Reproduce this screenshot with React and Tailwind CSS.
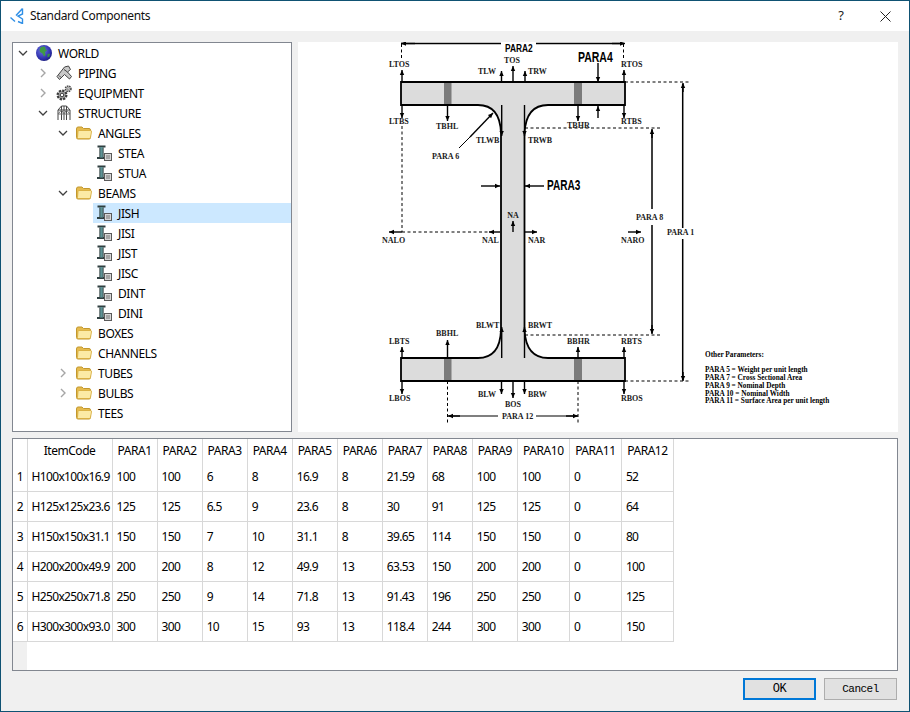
import React from "react";

const UI_FONT = "font-['Noto_Sans','Open_Sans',sans-serif]";

const TREE = [
  { d: 0, open: true, icon: "globe", label: "WORLD" },
  { d: 1, closed: true, icon: "pipe", label: "PIPING" },
  { d: 1, closed: true, icon: "gear", label: "EQUIPMENT" },
  { d: 1, open: true, icon: "frame", label: "STRUCTURE" },
  { d: 2, open: true, icon: "folder", label: "ANGLES" },
  { d: 3, icon: "beam", label: "STEA" },
  { d: 3, icon: "beam", label: "STUA" },
  { d: 2, open: true, icon: "folder", label: "BEAMS" },
  { d: 3, icon: "beam", label: "JISH", selected: true },
  { d: 3, icon: "beam", label: "JISI" },
  { d: 3, icon: "beam", label: "JIST" },
  { d: 3, icon: "beam", label: "JISC" },
  { d: 3, icon: "beam", label: "DINT" },
  { d: 3, icon: "beam", label: "DINI" },
  { d: 2, icon: "folder", label: "BOXES" },
  { d: 2, icon: "folder", label: "CHANNELS" },
  { d: 2, closed: true, icon: "folder", label: "TUBES" },
  { d: 2, closed: true, icon: "folder", label: "BULBS" },
  { d: 2, icon: "folder", label: "TEES" },
];

const INDENT = ["ml-0", "ml-5", "ml-10", "ml-[60px]"];

const COLUMNS = [
  ["ItemCode", "w-[85px]"],
  ["PARA1", "w-[45px]"],
  ["PARA2", "w-[45px]"],
  ["PARA3", "w-[45px]"],
  ["PARA4", "w-[45px]"],
  ["PARA5", "w-[45px]"],
  ["PARA6", "w-[45px]"],
  ["PARA7", "w-[45px]"],
  ["PARA8", "w-[45px]"],
  ["PARA9", "w-[45px]"],
  ["PARA10", "w-[52px]"],
  ["PARA11", "w-[52px]"],
  ["PARA12", "w-[52px]"],
];

const ROWS = [
  ["H100x100x16.9", 100, 100, 6, 8, 16.9, 8, 21.59, 68, 100, 100, 0, 52],
  ["H125x125x23.6", 125, 125, 6.5, 9, 23.6, 8, 30, 91, 125, 125, 0, 64],
  ["H150x150x31.1", 150, 150, 7, 10, 31.1, 8, 39.65, 114, 150, 150, 0, 80],
  ["H200x200x49.9", 200, 200, 8, 12, 49.9, 13, 63.53, 150, 200, 200, 0, 100],
  ["H250x250x71.8", 250, 250, 9, 14, 71.8, 13, 91.43, 196, 250, 250, 0, 125],
  ["H300x300x93.0", 300, 300, 10, 15, 93, 13, 118.4, 244, 300, 300, 0, 150],
];

function Chevron({ open }) {
  if (open) {
    return (
      <svg width="10" height="10" viewBox="0 0 10 10" fill="none" stroke="#404040" strokeWidth="1.3">
        <path d="M1 3 L5 7 L9 3" />
      </svg>
    );
  }
  return (
    <svg width="10" height="10" viewBox="0 0 10 10" fill="none" stroke="#a6a6a6" strokeWidth="1.4">
      <path d="M3 1 L7 5 L3 9" />
    </svg>
  );
}

function TreeIcon({ type }) {
  if (type === "globe") {
    return (
      <svg width="16" height="16" viewBox="0 0 16 16">
        <defs>
          <radialGradient id="globeFill" cx="0.4" cy="0.35" r="0.75">
            <stop offset="0" stopColor="#6f74e6" />
            <stop offset="0.7" stopColor="#2b2ea8" />
            <stop offset="1" stopColor="#15176a" />
          </radialGradient>
        </defs>
        <circle cx="8" cy="8" r="8" fill="url(#globeFill)" />
        <path d="M5 2 L9 1.5 L9.5 4 L11 5.5 L9 7 L9.5 10 L8 11.5 L6.5 8.5 L4 7 L3.5 4.5 Z" fill="#3f9a45" />
        <path d="M11.5 9 L14 8.5 L13.5 11.5 L11.5 12.5 Z" fill="#3a8f46" />
      </svg>
    );
  }
  if (type === "pipe") {
    return (
      <svg width="16" height="16" viewBox="0 0 16 16">
        <path d="M1 11.5 L8.5 2 L12.5 1 L14.5 4.5 L11.5 7 L15.5 11.5 L13.5 14 L8.5 9.5 L3.5 14.5 Z" fill="#c9c9c9" stroke="#444" strokeWidth="1" strokeLinejoin="round" />
        <path d="M8 4.5 L11.5 7 M3 10.5 L5 12.5" stroke="#444" strokeWidth="1" fill="none" />
      </svg>
    );
  }
  if (type === "gear") {
    return (
      <svg width="16" height="16" viewBox="0 0 16 16" fill="none">
        <circle cx="6" cy="10" r="4.4" fill="#a5a5a5" stroke="#3a3a3a" strokeWidth="2.2" strokeDasharray="2.2 1.2" />
        <circle cx="6" cy="10" r="1.8" fill="#fff" stroke="#3a3a3a" strokeWidth="1" />
        <circle cx="12.2" cy="3.8" r="2.8" fill="#c4c4c4" stroke="#4a4a4a" strokeWidth="1.5" strokeDasharray="1.5 0.8" />
        <circle cx="12.2" cy="3.8" r="1" fill="#fff" stroke="#4a4a4a" strokeWidth="0.5" />
      </svg>
    );
  }
  if (type === "frame") {
    return (
      <svg width="16" height="16" viewBox="0 0 16 16" fill="none" stroke="#454545" strokeWidth="1">
        <path d="M2 5 L5.5 1 H10.5 L14 5 V15 M2 5 V15 M5.5 1 V15 M10.5 1 V15 M8 1 V15 M2 5 H14" />
        <path d="M2 9 L5.5 5 L8 9 L10.5 5 L14 9 M2 9 H14" stroke="#707070" />
      </svg>
    );
  }
  if (type === "folder") {
    return (
      <svg width="16" height="14" viewBox="0 0 16 14">
        <path d="M0.5 3 Q0.5 1 2 1 H6 L7.5 2.5 H13 Q14.5 2.5 14.5 4 V11.5 Q14.5 13 13 13 H2 Q0.5 13 0.5 11.5 Z" fill="#e6bb4e" stroke="#c2982f" />
        <path d="M2 5.5 Q2 4.5 3 4.5 H14.5 Q15.8 4.5 15.5 6 L14.5 11.5 Q14.3 12.5 13 12.5 H2.5 Q1.5 12.5 1.5 11.5 Z" fill="#fbeaa6" stroke="#d4a93a" strokeWidth="0.8" />
      </svg>
    );
  }
  return (
    <svg width="16" height="16" viewBox="0 0 16 16">
      <path d="M1.5 1.5 H9.5 M1 13 H9" stroke="#2f3f40" strokeWidth="2" />
      <path d="M5.5 2 V12.5" stroke="#5f9496" strokeWidth="3" />
      <path d="M3.8 2.5 V12 M7.2 2.5 V12" stroke="#2f3f40" strokeWidth="0.9" />
      <rect x="8.5" y="8.5" width="7" height="7" fill="#d8d8d8" stroke="#5a5a5a" />
      <path d="M10 11 H14 M10 13 H14" stroke="#5a5a5a" strokeWidth="0.8" />
    </svg>
  );
}

function TreeRow({ item }) {
  return (
    <div className={`flex h-5 items-center ${INDENT[item.d]}`}>
      <span className="flex w-5 shrink-0 items-center justify-center">
        {item.open && <Chevron open />}
        {item.closed && <Chevron />}
      </span>
      <div className={`flex h-5 flex-1 items-center gap-[6px] pl-[3px] ${item.selected ? "bg-[#cce8ff]" : ""}`}>
        <span className="flex w-4 shrink-0 items-center justify-center">
          <TreeIcon type={item.icon} />
        </span>
        <span className="pt-[2px] tracking-[-0.4px] text-black">{item.label}</span>
      </div>
    </div>
  );
}

// labels: [x, y, text, anchor]
const LABELS = [
  [389, 67, "LTOS"], [621, 67, "RTOS"], [512, 63, "TOS", "middle"], [478, 74, "TLW"], [528, 74, "TRW"],
  [389, 124, "LTBS"], [621, 124, "RTBS"], [436, 129, "TBHL"], [567, 128, "TBHR"],
  [476, 143, "TLWB"], [528, 143, "TRWB"], [432, 159, "PARA 6"], [636, 220, "PARA 8"], [667, 235, "PARA 1"],
  [513, 218, "NA", "middle"], [382, 243, "NALO"], [482, 243, "NAL"], [528, 243, "NAR"], [621, 243, "NARO"],
  [476, 328, "BLWT"], [528, 328, "BRWT"], [436, 336, "BBHL"], [567, 344, "BBHR"],
  [389, 344, "LBTS"], [621, 344, "RBTS"], [389, 401, "LBOS"], [621, 401, "RBOS"],
  [478, 397, "BLW"], [528, 397, "BRW"], [513, 407, "BOS", "middle"], [502, 419, "PARA 12"],
];

const NOTES = [
  [357, "Other Parameters:"],
  [372, "PARA 5 = Weight per unit length"],
  [380, "PARA 7 = Cross Sectional Area"],
  [388, "PARA 9 = Nominal Depth"],
  [395.5, "PARA 10 = Nominal Width"],
  [403, "PARA 11 = Surface Area per unit length"],
];

// arrows: [x1, y1, x2, y2], head at x2,y2
const ARROWS = [
  [402, 82, 402, 70], [624, 82, 624, 70], [513, 82, 513, 66], [501.5, 82, 501.5, 71], [525, 82, 525, 71],
  [402, 105, 402, 118], [624, 105, 624, 118], [447.5, 105, 447.5, 121], [578, 105, 578, 121],
  [598, 63, 598, 82], [598, 118, 598, 106], [501.7, 105, 501.7, 136], [524.5, 105, 524.5, 136],
  [481, 186, 500, 186], [544, 186, 525, 186], [513, 232, 513, 221],
  [402, 232, 389, 232], [500, 232, 489, 232], [524, 232, 537, 232], [628, 232, 641, 232],
  [501.7, 358, 501.7, 327], [524.5, 358, 524.5, 327], [447.5, 358, 447.5, 340], [578, 358, 578, 347],
  [402, 358, 402, 347], [624, 358, 624, 347], [402, 381, 402, 394], [624, 381, 624, 394],
  [501.5, 381, 501.5, 394], [513, 381, 513, 398], [524.5, 381, 524.5, 394],
  [683, 92, 683, 83], [683, 372, 683, 381], [652, 138, 652, 129], [652, 325, 652, 334],
  [460, 416, 448, 416], [566, 416, 578, 416], [415, 43.5, 401, 43.5], [612, 43.5, 625, 43.5],
  [470, 137, 493, 113],
];

function head([x1, y1, x2, y2]) {
  const s = 2.2;
  const len = Math.hypot(x2 - x1, y2 - y1);
  const ux = (x2 - x1) / len;
  const uy = (y2 - y1) / len;
  const bx = x2 - ux * 5;
  const by = y2 - uy * 5;
  return `${x2},${y2} ${bx - uy * s},${by + ux * s} ${bx + uy * s},${by - ux * s}`;
}

function BeamDrawing() {
  return (
    <svg width="600" height="390" viewBox="298 42 600 390" className="block" style={{ fontFamily: "'Liberation Serif', serif" }}>
      {/* section outline */}
      <path
        d="M401 82 H625 V105 H548 Q526 105 524.5 133 V330 Q526 358 548 358 H625 V381 H401 V358 H478 Q500 358 501 330 V133 Q500 105 478 105 H401 Z"
        fill="#dcdcdc"
        stroke="#000"
        strokeWidth="1.8"
      />
      <g fill="#7b7b7b">
        <rect x="444" y="83" width="7.5" height="21" />
        <rect x="574" y="83" width="8" height="21" />
        <rect x="444" y="359" width="7.5" height="21" />
        <rect x="574" y="359" width="8" height="21" />
      </g>
      {/* dashed extension lines */}
      <g fill="none" stroke="#000" strokeWidth="1" strokeDasharray="3 2.5">
        <path d="M401.5 44 V58 M623.5 44 V58 M402 126 V232 M402 232 H490" />
        <path d="M625 82 H691 M525 128 H660 M525 335 H660 M625 381 H691" />
        <path d="M447.5 381 V425 M578 381 V425" />
      </g>
      {/* dimension lines */}
      <g fill="none" stroke="#000">
        <path d="M401 43.5 H501 M536 43.5 H624" strokeWidth="1.4" />
        <path d="M682.7 84 V228 M682.7 239 V380" strokeWidth="1.5" />
        <path d="M652 130 V209 M652 225 V333" strokeWidth="1.5" />
        <path d="M449 416 H498 M536 416 H577" strokeWidth="1.1" />
        <path d="M459 148 L470 137" strokeWidth="1" />
      </g>
      <g stroke="#000" strokeWidth="1.4">
        {ARROWS.map((a, i) => (
          <line key={i} x1={a[0]} y1={a[1]} x2={a[2]} y2={a[3]} />
        ))}
      </g>
      <g fill="#000">
        {ARROWS.map((a, i) => (
          <polygon key={i} points={head(a)} />
        ))}
      </g>
      <g fontSize="8" fontWeight="700" fill="#1a1a1a">
        {LABELS.map(([x, y, text, anchor]) => (
          <text key={text} x={x} y={y} textAnchor={anchor || "start"}>{text}</text>
        ))}
      </g>
      {/* squeezed sans labels, the original is a condensed face */}
      <g fontWeight="700" fill="#000" style={{ fontFamily: "'Liberation Sans', sans-serif" }}>
        <text transform="translate(505 52) scale(0.76 1)" fontSize="11">PARA2</text>
        <text transform="translate(578 62) scale(0.7 1)" fontSize="15">PARA4</text>
        <text transform="translate(547 190) scale(0.72 1)" fontSize="14">PARA3</text>
      </g>
      <g fontSize="7.3" fontWeight="700" fill="#000">
        {NOTES.map(([y, text]) => (
          <text key={text} x="705" y={y}>{text}</text>
        ))}
      </g>
    </svg>
  );
}

function DataTable() {
  return (
    <div className="relative h-[233px] flex-none border border-[#828790] bg-white">
      <table className="w-[661px] table-fixed border-collapse text-[12px] leading-none text-black">
        <thead>
          <tr className="h-[22px] tracking-[-0.45px]">
            <th className="w-[14px] border-r border-[#d8d8d8] p-0 font-normal" />
            {COLUMNS.map(([name, w]) => (
              <th key={name} className={`${w} border-r border-[#d8d8d8] p-0 pt-[2px] text-center font-normal`}>{name}</th>
            ))}
          </tr>
        </thead>
        <tbody className="tracking-[-0.65px]">
          {ROWS.map((row, i) => (
            <tr key={i} className="h-[30px]">
              <td className="border-r border-b border-[#d8d8d8] pt-[2px] text-center">{i + 1}</td>
              {row.map((v, j) => (
                <td key={j} className="border-r border-b border-[#d8d8d8] pt-[2px] pl-[4px] whitespace-nowrap">{v}</td>
              ))}
            </tr>
          ))}
        </tbody>
      </table>
      <div className="absolute bottom-0 left-0 h-[28px] w-[14px] bg-[#f0f0f0]" />
    </div>
  );
}

export default function App() {
  return (
    <div className={`flex h-[712px] w-[910px] flex-col border border-[#0f5273] bg-[#f0f0f0] text-[12px] ${UI_FONT}`}>
      <div className="flex h-[30px] flex-none items-center bg-white pl-[9px]">
        <svg width="14" height="16" viewBox="0 0 14 16" fill="none" stroke="#2f8fe6" strokeWidth="1.4">
          <path d="M0.5 9.5 L5 13.5 M6 7.5 L12.5 0.5 M12.5 0.5 V6 L8 8 L12.5 11 V15.5 L8 13.5" />
        </svg>
        <span className="ml-[6px] tracking-[-0.35px] text-[#111]">Standard Components</span>
        <span className="mr-[36px] ml-auto text-[13px] text-[#222]">?</span>
        <svg className="mr-[18px]" width="11" height="11" viewBox="0 0 11 11" stroke="#222" strokeWidth="1">
          <path d="M0.5 0.5 L10.5 10.5 M10.5 0.5 L0.5 10.5" />
        </svg>
      </div>

      <div className="flex flex-1 flex-col gap-[6px] pt-[11px] pr-[11px] pb-[6px] pl-[11px]">
        <div className="flex h-[390px] flex-none gap-[6px]">
          <div className="w-[280px] flex-none border border-[#828790] bg-white">
            {TREE.map((item) => (
              <TreeRow key={item.label} item={item} />
            ))}
          </div>
          <div className="flex-1 bg-white">
            <BeamDrawing />
          </div>
        </div>

        <DataTable />

        <div className="flex flex-none justify-end gap-[8px] pt-[1px] pr-[1px] font-['Liberation_Mono',monospace] text-[11px] tracking-[-0.5px] text-black">
          <button className="h-[22px] w-[73px] border-2 border-[#0078d7] bg-[#e1e1e1] text-[12px]">OK</button>
          <button className="h-[22px] w-[73px] border border-[#adadad] bg-[#e1e1e1]">Cancel</button>
        </div>
      </div>
    </div>
  );
}
